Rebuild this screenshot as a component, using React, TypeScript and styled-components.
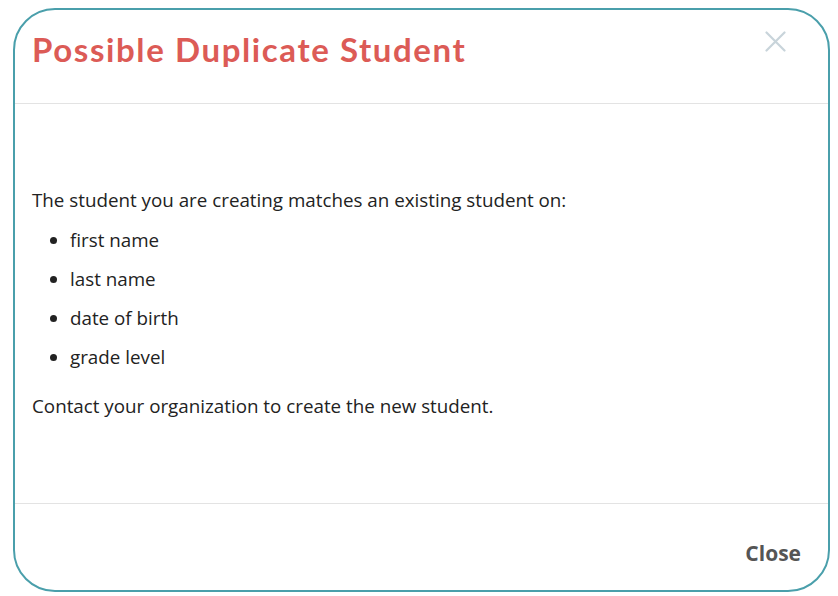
import React from "react";
import styled, { createGlobalStyle } from "styled-components";

const GlobalStyle = createGlobalStyle`
  html, body {
    margin: 0;
    padding: 0;
    background: #ffffff;
  }
  * {
    box-sizing: border-box;
  }
`;

const Page = styled.div`
  width: 838px;
  height: 596px;
  padding: 8px 9px 0 13px;
  background: #ffffff;
`;

const Modal = styled.div`
  width: 817px;
  height: 584px;
  border: 2px solid #4a9fab;
  border-radius: 42px;
  background: #fff;
  display: flex;
  flex-direction: column;
  overflow: hidden;
`;

const Header = styled.div`
  height: 94px;
  flex-shrink: 0;
  display: flex;
  justify-content: space-between;
  align-items: flex-start;
  padding: 20px 42px 0 17px;
  border-bottom: 1px solid #e3e3e3;
`;

const Title = styled.h1`
  margin: 0;
  font-family: Lato, "Open Sans", sans-serif;
  font-weight: 700;
  font-size: 33px;
  letter-spacing: 1.6px;
  line-height: 38px;
  color: #dc5b56;
`;

const CloseIcon = styled.button`
  width: 22px;
  height: 22px;
  padding: 0;
  border: none;
  background: none;
  cursor: pointer;
  display: flex;
  align-items: center;
  justify-content: center;
`;

const Body = styled.div`
  flex: 1;
  padding: 84px 17px 0 17px;
  font-family: "Open Sans", sans-serif;
  font-size: 18.8px;
  line-height: 24px;
  color: #222;
  border-bottom: 1px solid #e3e3e3;
`;

const Para = styled.p<{ $gap?: number }>`
  margin: 0;
  margin-top: ${(p) => p.$gap ?? 0}px;
`;

const List = styled.ul`
  margin: 16px 0 0 0;
  padding: 0 0 0 38px;
  list-style: disc;

  li + li {
    margin-top: 15px;
  }
`;

const Footer = styled.div`
  height: 86px;
  flex-shrink: 0;
  display: flex;
  justify-content: flex-end;
  align-items: flex-start;
  padding: 36px 27px 0 0;
`;

const CloseButton = styled.button`
  border: none;
  background: none;
  padding: 0;
  font-family: "Open Sans", sans-serif;
  font-weight: 700;
  font-size: 21px;
  line-height: 26px;
  color: #555;
  cursor: pointer;
`;

const fields = ["first name", "last name", "date of birth", "grade level"];

const App = () => {
  return (
    <Page>
      <GlobalStyle />
      <Modal>
        <Header>
          <Title>Possible Duplicate Student</Title>
          <CloseIcon aria-label="Close">
            <svg width="21" height="21" viewBox="0 0 21 21">
              <path
                d="M1.5 1.5 L19.5 19.5 M19.5 1.5 L1.5 19.5"
                stroke="#c8d4da"
                strokeWidth="2.2"
                strokeLinecap="round"
              />
            </svg>
          </CloseIcon>
        </Header>
        <Body>
          <Para>The student you are creating matches an existing student on:</Para>
          <List>
            {fields.map((f) => (
              <li key={f}>{f}</li>
            ))}
          </List>
          <Para $gap={25}>Contact your organization to create the new student.</Para>
        </Body>
        <Footer>
          <CloseButton>Close</CloseButton>
        </Footer>
      </Modal>
    </Page>
  );
};

export default App;
